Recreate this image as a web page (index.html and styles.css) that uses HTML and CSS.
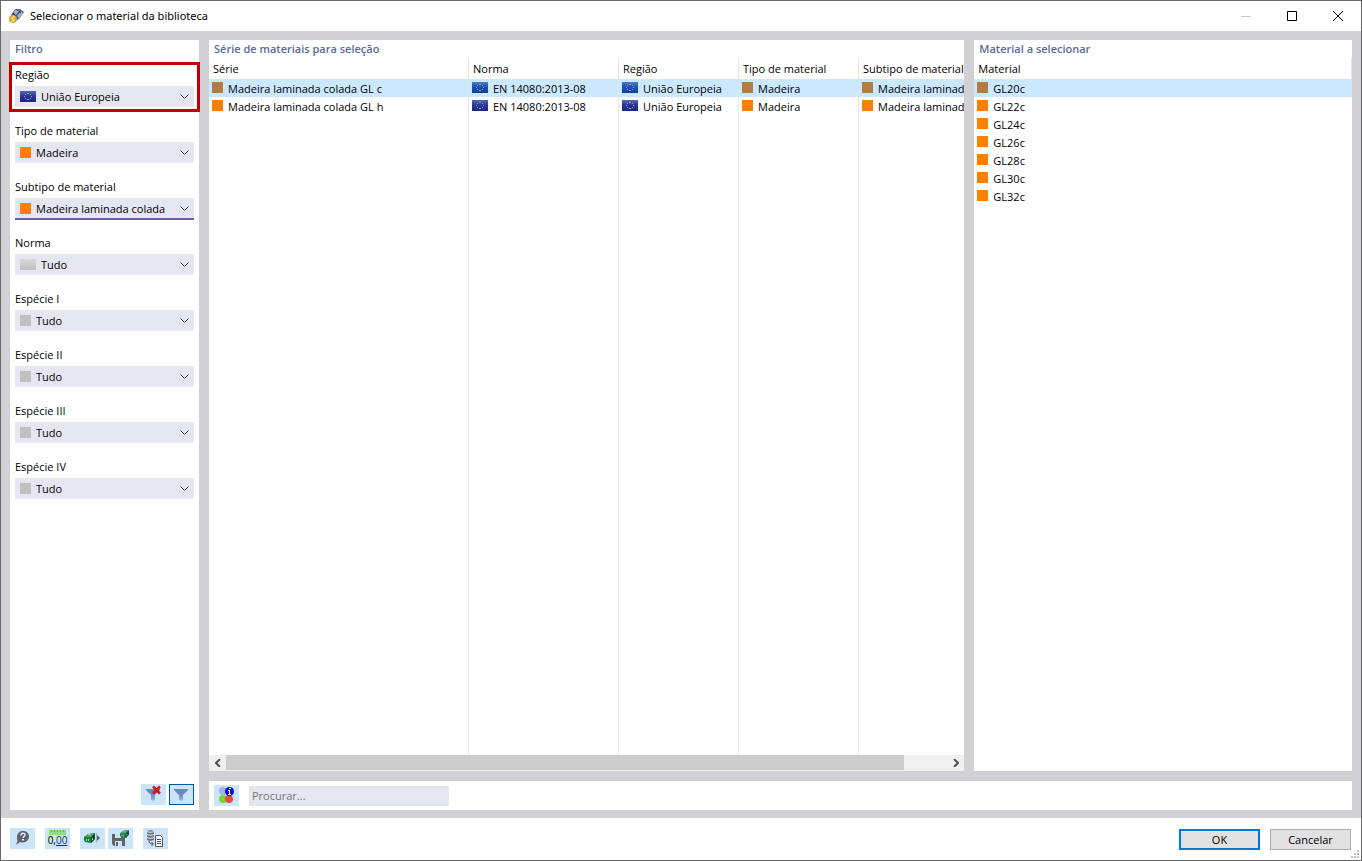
FILE: index.html
```html
<!DOCTYPE html>
<html lang="pt">
<head>
<meta charset="utf-8">
<title>Selecionar o material da biblioteca</title>
<link rel="stylesheet" href="styles.css">
</head>
<body>
<svg class="defs" aria-hidden="true">
  <defs>
    <linearGradient id="flag-blue" x1="0" y1="0" x2="0" y2="1">
      <stop offset="0" stop-color="#5568b4"/><stop offset=".45" stop-color="#26369c"/><stop offset="1" stop-color="#1c2685"/>
    </linearGradient>
    <linearGradient id="flag-sel" x1="0" y1="0" x2="0" y2="1">
      <stop offset="0" stop-color="#4482c8"/><stop offset=".45" stop-color="#1a50b4"/><stop offset="1" stop-color="#1440a0"/>
    </linearGradient>
    <linearGradient id="funnel-fill" x1="0" y1="0" x2="0" y2="1">
      <stop offset="0" stop-color="#6286c0"/><stop offset=".5" stop-color="#6a8cc6"/><stop offset="1" stop-color="#a0bce6"/>
    </linearGradient>
    <symbol id="stars" viewBox="0 0 16 11">
      <g fill="#a89c70"><path d="M7 2h2v1H7zM7 8h2v1H7zM4 5h1v1H4zM11 5h1v1h-1zM5 3h1v1H5zM10 3h1v1h-1zM5 7h1v1H5zM10 7h1v1h-1z"/></g>
    </symbol>
    <symbol id="eu" viewBox="0 0 16 11"><rect width="16" height="11" fill="url(#flag-blue)"/><use href="#stars"/></symbol>
    <symbol id="eu-sel" viewBox="0 0 16 11"><rect width="16" height="11" fill="url(#flag-sel)"/><use href="#stars"/></symbol>
    <symbol id="funnel" viewBox="0 0 25 21"><path d="M5 5h14v1l-5 5v5l-2 1-2-1v-5L5 6z" fill="url(#funnel-fill)"/></symbol>
    <symbol id="cube" viewBox="0 0 11 10">
      <path d="M0 4l4-3 7-1v6l-4 4-6-1-1-2z" fill="#1c7a40"/><path d="M1 4l4-3 5 0-3 3z" fill="#58a870"/><path d="M7 4l4-3v5l-4 4z" fill="#0b4f2c"/><path d="M2 6h1v2H2zM4 6h1v2H4zM8 5h1v2H8zM4 1h2v1H4z" fill="#a8d4b4"/>
    </symbol>
  </defs>
</svg>
<div class="window">
  <header class="titlebar">
    <svg class="app-icon" viewBox="0 0 16 16">
      <path d="M2 7l4-6 5 0 4 3-5 7-4 2z" fill="#48607f"/>
      <path d="M4 4l3-3 4 1-4 5zM8 8l4-5 2 2-4 6z" fill="#9db0cc"/>
      <path d="M7 1l5 4M4 5l5 5" stroke="#273a55"/>
      <circle cx="4" cy="11" r="4" fill="#d6a72c"/>
      <path d="M6 9H3v2h2v2H2" fill="none" stroke="#fff0a0"/>
    </svg>
    <h1 class="title">Selecionar o material da biblioteca</h1>
    <div class="caption-buttons">
      <button class="caption" aria-label="Minimizar" disabled><svg viewBox="0 0 10 10"><path d="M0 5.5h10" stroke="#c8c8c8"/></svg></button>
      <button class="caption" aria-label="Maximizar"><svg viewBox="0 0 10 10"><path d="M.5.5h9v9h-9z" fill="none" stroke="#000"/></svg></button>
      <button class="caption" aria-label="Fechar"><svg viewBox="0 0 10 10"><path d="M0 0l10 10M10 0L0 10" stroke="#000"/></svg></button>
    </div>
  </header>

  <main class="body">
    <section class="panel filter">
      <h2 class="panel-title">Filtro</h2>
      <div class="fields">
        <div class="field highlighted"><label for="f1">Região</label>
          <div class="combo"><svg class="flag"><use href="#eu"/></svg><select id="f1" class="after-flag"><option>União Europeia</option></select><svg class="chevron" viewBox="0 0 9 5"><path d="M.5.5l4 4 4-4"/></svg></div></div>
        <div class="field"><label for="f2">Tipo de material</label>
          <div class="combo"><span class="swatch"></span><select id="f2"><option>Madeira</option></select><svg class="chevron" viewBox="0 0 9 5"><path d="M.5.5l4 4 4-4"/></svg></div></div>
        <div class="field focused"><label for="f3">Subtipo de material</label>
          <div class="combo"><span class="swatch"></span><select id="f3"><option>Madeira laminada colada</option></select><svg class="chevron" viewBox="0 0 9 5"><path d="M.5.5l4 4 4-4"/></svg></div></div>
        <div class="field"><label for="f4">Norma</label>
          <div class="combo"><span class="flag blank"></span><select id="f4" class="after-flag"><option>Tudo</option></select><svg class="chevron" viewBox="0 0 9 5"><path d="M.5.5l4 4 4-4"/></svg></div></div>
        <div class="field"><label for="f5">Espécie I</label>
          <div class="combo"><span class="swatch gray"></span><select id="f5"><option>Tudo</option></select><svg class="chevron" viewBox="0 0 9 5"><path d="M.5.5l4 4 4-4"/></svg></div></div>
        <div class="field"><label for="f6">Espécie II</label>
          <div class="combo"><span class="swatch gray"></span><select id="f6"><option>Tudo</option></select><svg class="chevron" viewBox="0 0 9 5"><path d="M.5.5l4 4 4-4"/></svg></div></div>
        <div class="field"><label for="f7">Espécie III</label>
          <div class="combo"><span class="swatch gray"></span><select id="f7"><option>Tudo</option></select><svg class="chevron" viewBox="0 0 9 5"><path d="M.5.5l4 4 4-4"/></svg></div></div>
        <div class="field"><label for="f8">Espécie IV</label>
          <div class="combo"><span class="swatch gray"></span><select id="f8"><option>Tudo</option></select><svg class="chevron" viewBox="0 0 9 5"><path d="M.5.5l4 4 4-4"/></svg></div></div>
      </div>
      <div class="filter-tools">
        <button class="tool" aria-label="Limpar filtro"><svg viewBox="0 0 25 21"><use href="#funnel"/><path d="M12 2.500l7 7M19 2.500l-7 7" stroke="#e01010" stroke-width="2.500"/></svg></button>
        <button class="tool active" aria-label="Filtro ativo"><svg viewBox="0 0 25 21"><use href="#funnel"/></svg></button>
      </div>
    </section>

    <section class="panel series">
      <h2 class="panel-title">Série de materiais para seleção</h2>
      <div class="viewport">
        <table class="grid series-grid">
          <colgroup><col class="c-series"><col class="c-norm"><col class="c-type"><col class="c-type"><col class="c-sub"></colgroup>
          <thead><tr><th>Série</th><th>Norma</th><th>Região</th><th>Tipo de material</th><th>Subtipo de material</th></tr></thead>
          <tbody>
            <tr class="selected">
              <td><div class="cell"><span class="swatch"></span>Madeira laminada colada GL c</div></td>
              <td><div class="cell"><svg class="flag"><use href="#eu-sel"/></svg>EN 14080:2013-08</div></td>
              <td><div class="cell"><svg class="flag"><use href="#eu-sel"/></svg>União Europeia</div></td>
              <td><div class="cell"><span class="swatch"></span>Madeira</div></td>
              <td><div class="cell"><span class="swatch"></span>Madeira laminada</div></td>
            </tr>
            <tr>
              <td><div class="cell"><span class="swatch"></span>Madeira laminada colada GL h</div></td>
              <td><div class="cell"><svg class="flag"><use href="#eu"/></svg>EN 14080:2013-08</div></td>
              <td><div class="cell"><svg class="flag"><use href="#eu"/></svg>União Europeia</div></td>
              <td><div class="cell"><span class="swatch"></span>Madeira</div></td>
              <td><div class="cell"><span class="swatch"></span>Madeira laminada</div></td>
            </tr>
            <tr class="filler"><td></td><td></td><td></td><td></td><td></td></tr>
          </tbody>
        </table>
      </div>
      <div class="scrollbar">
        <button class="arrow" aria-label="Rolar para a esquerda"><svg viewBox="0 0 6 8"><path d="M5 0L1 4l4 4"/></svg></button>
        <div class="track"><div class="thumb"></div></div>
        <button class="arrow" aria-label="Rolar para a direita"><svg viewBox="0 0 6 8"><path d="M1 0l4 4-4 4"/></svg></button>
      </div>
    </section>

    <section class="panel materials">
      <h2 class="panel-title">Material a selecionar</h2>
      <table class="grid">
        <thead><tr><th>Material</th></tr></thead>
        <tbody>
          <tr class="selected"><td><div class="cell"><span class="swatch"></span>GL20c</div></td></tr>
          <tr><td><div class="cell"><span class="swatch"></span>GL22c</div></td></tr>
          <tr><td><div class="cell"><span class="swatch"></span>GL24c</div></td></tr>
          <tr><td><div class="cell"><span class="swatch"></span>GL26c</div></td></tr>
          <tr><td><div class="cell"><span class="swatch"></span>GL28c</div></td></tr>
          <tr><td><div class="cell"><span class="swatch"></span>GL30c</div></td></tr>
          <tr><td><div class="cell"><span class="swatch"></span>GL32c</div></td></tr>
        </tbody>
      </table>
    </section>

    <section class="panel search">
      <button class="tool" aria-label="Informações do material"><svg viewBox="0 0 25 21"><circle cx="9" cy="6" r="4" fill="#a0b0e8"/><circle cx="9" cy="14" r="4" fill="#6cdc28"/><circle cx="15" cy="14" r="4" fill="#e84848"/><circle cx="15.500" cy="6.500" r="4.500" fill="#0808f0"/><path d="M15 3h2v1h-2zM14 5h2v4h1v1h-3V9h1V6h-1z" fill="#fff"/></svg></button>
      <input class="search-box" type="text" placeholder="Procurar..." aria-label="Procurar">
    </section>
  </main>

  <footer class="footer">
    <div class="tools">
      <button class="tool" aria-label="Ajuda"><svg viewBox="0 0 25 21"><path d="M13 3c4 0 6 2.500 6 5.500s-3 6-6 6c-1 0-2 0-3-.5L6 17l1.500-4C7 12 7 10 7 9c0-3.500 2.500-6 6-6z" fill="#606468"/><path d="M11 7.500c0-3 4-3 4-.5 0 1.500-2 1.500-2 3" fill="none" stroke="#d8ebfa" stroke-width="1.500"/><path d="M12 11h2v1.500h-2z" fill="#d8ebfa"/></svg></button>
      <button class="tool units" aria-label="Unidades e casas decimais"><svg viewBox="0 0 17 5"><path d="M0 0h17v5H0z" fill="#8fdc86"/><path d="M2.500 0v2M5.500 0v2M8.500 0v2M11.500 0v2M14.500 0v2" stroke="#60b060"/></svg><span>0,<u>00</u></span></button>
      <button class="tool" aria-label="Exportar material"><svg viewBox="0 0 25 21"><use href="#cube" x="4" y="5" width="11" height="10"/><path d="M16.500 5v10" stroke="#a8b4c0"/><path d="M17 7l3 3-3 3z" fill="#606468"/></svg></button>
      <button class="tool" aria-label="Salvar material"><svg viewBox="0 0 25 21"><path d="M4 6h13v12H6l-2-2z" fill="#606468"/><path d="M7 6h6v4H7zM7 13h7v5H7z" fill="#cce4f7"/><path d="M8 14h2v4H8z" fill="#606468"/><use href="#cube" x="12" y="2" width="9" height="8"/></svg></button>
      <button class="tool" aria-label="Copiar da base de dados"><svg viewBox="0 0 25 21"><path d="M4 3c1-1 6-1 7 0v9c-1 1-6 1-7 0z" fill="#70767c"/><path d="M4 3.500c2 1 5 1 7 0M4 6.500c2 1 5 1 7 0M4 9.500c2 1 5 1 7 0" fill="none" stroke="#e4eef6"/><path d="M6 13c0 2 1 3 4 3M8.500 14l2 2-2 2" fill="none" stroke="#50565c"/><path d="M12.500 7.500h5l2 2v9h-7z" fill="#fff" stroke="#50565c"/><path d="M14 11.500h4M14 13.500h4M14 15.500h4" stroke="#50565c"/></svg></button>
    </div>
    <div class="actions"><button class="action default">OK</button><button class="action">Cancelar</button></div>
    <svg class="grip" viewBox="0 0 8 8"><path d="M6 0h2v2H6zM3 3h2v2H3zM6 3h2v2H6zM0 6h2v2H0zM3 6h2v2H3zM6 6h2v2H6z" fill="#bfbfbf"/></svg>
  </footer>
</div>
</body>
</html>
```
FILE: styles.css
```css
* { box-sizing: border-box; }
body {
  margin: 0;
  font: 11px/16px "Open Sans", "Noto Sans", sans-serif;
  color: #000;
}
button, input, select { font: inherit; color: inherit; margin: 0; padding: 0; border: 0; border-radius: 0; }
svg { display: block; }
h1, h2 { margin: 0; }
.defs { position: absolute; width: 0; height: 0; }

.window { display: flex; flex-direction: column; height: 100vh; border: 1px solid #696969; background: #fff; }

.titlebar { display: flex; align-items: center; flex: none; height: 30px; padding-left: 8px; gap: 5px; }
.app-icon { width: 16px; height: 16px; }
.title { flex: 1; font-family: "Noto Sans", sans-serif; font-size: 11px; font-weight: 400; }
.caption-buttons { display: flex; }
.caption { display: grid; place-items: center; width: 46px; height: 30px; background: none; }
.caption svg { width: 10px; height: 10px; }

.body {
  flex: 1;
  min-height: 0;
  display: grid;
  grid-template-columns: 189px minmax(0, 2fr) minmax(0, 1fr);
  grid-template-rows: minmax(0, 1fr) 29px;
  gap: 10px;
  padding: 9px 9px 8px;
  background: #d1d0d5;
}
.panel { background: #fff; display: flex; flex-direction: column; min-width: 0; }
.panel-title { flex: none; height: 18px; padding-left: 5px; font-size: 11px; line-height: 18px; font-weight: 600; color: #5a6c96; }
.filter { grid-row: 1 / 3; }

.fields { flex: 1; display: flex; flex-direction: column; gap: 12px; padding: 7px 5px 0; }
.field { height: 44px; }
.field label { display: block; height: 21px; line-height: 20px; }
.highlighted { margin: 0 -3px; padding: 0 3px; outline: 3px solid #c00000; }
.combo { display: grid; align-items: center; height: 21px; background: #e6e6f1; }
.combo > * { grid-area: 1 / 1; }
.combo select { appearance: none; width: 100%; height: 21px; padding-left: 21px; background: none; outline: 0; }
.combo select.after-flag { padding-left: 26px; }
.combo .swatch, .combo .flag { margin-left: 5px; pointer-events: none; }
.chevron { justify-self: end; width: 9px; height: 5px; margin-right: 5px; pointer-events: none; fill: none; stroke: #505050; }
.focused .combo { height: 22px; border-bottom: 2px solid #6860a8; }

.swatch { flex: none; width: 11px; height: 11px; background: #ff8000; }
.swatch.gray { background: #c0c0c0; }
.selected .swatch { background: #b37d40; }
.flag { flex: none; width: 16px; height: 11px; }
.flag.blank { background: linear-gradient(#d8d8d8, #c0c0c0); }

.filter-tools { display: flex; justify-content: flex-end; gap: 3px; padding: 0 5px 5px; }
.tool { display: grid; place-items: center; place-content: center; width: 25px; height: 21px; background: #cce4f7; }
.tool svg { width: 25px; height: 21px; }
.tool.active { border: 1px solid #005499; overflow: hidden; }

.viewport { flex: 1; min-height: 0; overflow: hidden; }
.grid { width: 100%; border-collapse: separate; border-spacing: 0; table-layout: fixed; white-space: nowrap; }
.grid th { height: 21px; padding: 0 0 0 4px; text-align: left; font-weight: 400; border-right: 1px solid #e5e5e5; }
.grid td { height: 18px; padding: 0 0 0 3px; }
.series-grid { width: 802px; height: 100%; }
.series-grid td { border-right: 1px solid #e8e8e8; }
.series-grid .selected td { border-color: #dce9f5; }
.series-grid .filler td { height: auto; }
.c-series { width: 260px; }
.c-norm { width: 150px; }
.c-type { width: 120px; }
.cell { display: flex; align-items: center; gap: 5px; height: 18px; padding-top: 2px; }
.cell .swatch, .cell .flag { margin-bottom: 3px; }
.selected td { background: #cce8ff; }

.scrollbar { flex: none; display: flex; height: 16px; background: #f0f0f0; }
.arrow { display: grid; place-items: center; width: 17px; background: none; }
.arrow svg { width: 6px; height: 8px; fill: none; stroke: #505050; stroke-width: 2; }
.track { flex: 1; padding-bottom: 1px; }
.thumb { width: 94%; height: 15px; background: #cdcdcd; }

.search { grid-column: 2 / 4; flex-direction: row; align-items: center; gap: 10px; padding: 0 5px; }
.search-box { width: 200px; height: 20px; padding: 0 3px; background: #e6e6f1; outline: 0; }
.search-box::placeholder { color: #757575; opacity: 1; }

.footer { flex: none; display: flex; justify-content: space-between; height: 42px; padding: 10px 10px 0 9px; position: relative; }
.tools { display: flex; }
.tools .tool { margin-right: 10px; }
.tools .tool:nth-child(3) { margin-right: 3px; }
.tools .units { place-content: start center; padding-top: 2px; font-size: 10px; line-height: 11px; font-weight: 500; }
.units svg { width: 17px; height: 5px; }
.units u { color: #103080; }
.actions { display: flex; gap: 10px; padding-top: 1px; }
.action { width: 81px; height: 21px; background: #e1e1e1; border: 1px solid #adadad; }
.action.default { border: 2px solid #0078d7; }
.grip { position: absolute; right: 2px; bottom: 2px; width: 8px; height: 8px; }
```
